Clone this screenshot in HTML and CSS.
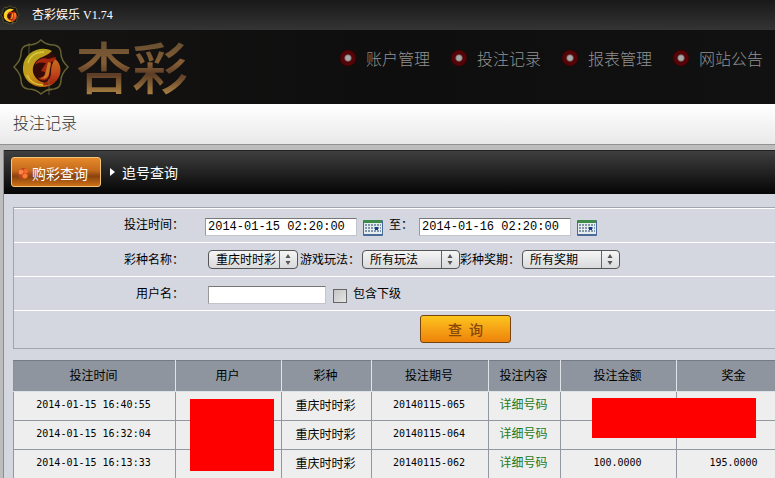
FILE: index.html
```html
<!DOCTYPE html>
<html lang="zh-CN">
<head>
  <meta charset="UTF-8" />
  <meta name="viewport" content="width=device-width, initial-scale=1.0"/>
  <title>杏彩娱乐 V1.74</title>
  <link rel="stylesheet" href="styles.css">
</head>
<body>
  <svg class="defs" width="0" height="0" aria-hidden="true">
    <defs>
      <linearGradient id="gold" x1="0" y1="0" x2=".6" y2="1">
        <stop offset="0" stop-color="#a8a41f"/>
        <stop offset=".6" stop-color="#c99a1a"/>
        <stop offset="1" stop-color="#b8610f"/>
      </linearGradient>
      <linearGradient id="flame" x1="0" y1="0" x2="0" y2="1">
        <stop offset="0" stop-color="#c4701c"/>
        <stop offset=".5" stop-color="#c24a1c"/>
        <stop offset="1" stop-color="#a3200c"/>
      </linearGradient>
      <symbol id="emblem" viewBox="0 0 58 58">
        <path d="M29 2c4 4 8 5 13 5 6 1 7 5 7 9 0 5 3 9 7 13-4 4-7 8-7 13 0 4-1 8-7 9-5 0-9 1-13 5-4-4-8-5-13-5-6-1-7-5-7-9 0-5-3-9-7-13 4-4 7-8 7-13 0-4 1-8 7-9 5 0 9-1 13-5z" fill="#12110c" stroke="#666234" stroke-width="1.500"/>
        <circle cx="30" cy="29" r="17" fill="#330c07"/>
        <path d="M40 13C29 7 12 14 11 29c-1 11 8 20 19 20 6 0 10-2 13-5-8 2-15 1-19-4-6-7-3-16 4-20 4-2 8-3 12-7z" fill="url(#gold)"/>
        <path d="M43 21c7 5 7 15 2 21-4 5-10 6-15 4 6-2 9-6 9-12 0-5 1-9 4-13z" fill="url(#flame)"/>
        <path d="M23 27c2-6 8-8 13-6l8-2c-1 3-2 5-5 5l-2 14c-1 5-8 6-11 2 5 0 7-3 7-6l-4-1 5-8c-4-1-8-1-11 2z" fill="#a5260e"/>
        <path d="M36 24l-3 13c-1 2-3 3-5 3 4 2 8 0 9-4l2-11z" fill="#c97524"/>
        <path d="M15 37c3 7 9 10 16 10M16 25c2-7 8-11 16-11" fill="none" stroke="#d6c93a" stroke-width="1.500"/>
        <path d="M37 41v16M34 52h6M17 5v12" stroke="#78703e" stroke-width="1" opacity=".7"/>
      </symbol>
      <symbol id="calendar" viewBox="0 0 20 17">
        <rect x="0" y="1" width="20" height="16" rx="1" fill="#4a6a98"/>
        <rect x="1" y="1" width="18" height="14" fill="#e7ecef"/>
        <rect x="1" y="1" width="18" height="3" fill="#3d8b48"/>
        <path d="M2 6h16M2 9h16M2 12h16" stroke="#8097ab" stroke-width="2" stroke-dasharray="2 1"/>
        <rect x="12" y="8" width="3" height="3" fill="#173d91"/>
      </symbol>
    </defs>
  </svg>

  <div class="titlebar">
    <svg class="app-icon"><use href="#emblem"/></svg>
    <span>杏彩娱乐 V1.74</span>
  </div>

  <header class="header">
    <a class="logo" href="#">
      <svg class="logo-mark"><use href="#emblem"/></svg>
      <span class="logo-text">杏彩</span>
    </a>
    <nav class="nav">
      <a href="#">账户管理</a>
      <a href="#">投注记录</a>
      <a href="#">报表管理</a>
      <a href="#">网站公告</a>
    </nav>
  </header>

  <h1 class="page-title">投注记录</h1>

  <main class="panel">
    <div class="tabs">
      <a class="tab active" href="#"><span class="tab-dots"></span>购彩查询</a>
      <a class="tab" href="#">追号查询</a>
    </div>

    <form class="search">
      <div class="row">
        <label class="label" for="start">投注时间：</label>
        <div class="fields dates">
          <input class="text date" type="text" id="start" value="2014-01-15 02:20:00">
          <button class="cal" type="button" aria-label="选择开始时间"><svg><use href="#calendar"/></svg></button>
          <label for="end">至：</label>
          <input class="text date" type="text" id="end" value="2014-01-16 02:20:00">
          <button class="cal" type="button" aria-label="选择结束时间"><svg><use href="#calendar"/></svg></button>
        </div>
      </div>
      <div class="row">
        <label class="label" for="lottery">彩种名称：</label>
        <div class="fields">
          <select class="short" id="lottery"><option>重庆时时彩</option></select>
          <label for="play">游戏玩法：</label>
          <select id="play"><option>所有玩法</option></select>
          <label for="issue">彩种奖期：</label>
          <select id="issue"><option>所有奖期</option></select>
        </div>
      </div>
      <div class="row">
        <label class="label" for="user">用户名：</label>
        <div class="fields users">
          <input class="text user" type="text" id="user">
          <input class="check" type="checkbox" id="sub">
          <label for="sub">包含下级</label>
        </div>
      </div>
      <div class="actions">
        <button class="submit" type="submit">查&ensp;询</button>
      </div>
    </form>

    <div class="records">
      <table>
        <colgroup>
          <col class="c-time"><col class="c-user"><col class="c-type"><col class="c-issue"><col class="c-detail"><col class="c-money"><col class="c-money">
        </colgroup>
        <thead>
          <tr><th>投注时间</th><th>用户</th><th>彩种</th><th>投注期号</th><th>投注内容</th><th>投注金额</th><th>奖金</th></tr>
        </thead>
        <tbody>
          <tr><td>2014-01-15 16:40:55</td><td></td><td>重庆时时彩</td><td>20140115-065</td><td><a href="#">详细号码</a></td><td></td><td></td></tr>
          <tr><td>2014-01-15 16:32:04</td><td></td><td>重庆时时彩</td><td>20140115-064</td><td><a href="#">详细号码</a></td><td></td><td></td></tr>
          <tr><td>2014-01-15 16:13:33</td><td></td><td>重庆时时彩</td><td>20140115-062</td><td><a href="#">详细号码</a></td><td>100.0000</td><td>195.0000</td></tr>
        </tbody>
      </table>
      <div class="mask mask-user"></div>
      <div class="mask mask-money"></div>
    </div>
  </main>
</body>
</html>
```
FILE: styles.css
```css
:root {
  --cjk: "Noto Sans CJK SC", sans-serif;
  --panel-bg: #d4d7df;
  --line: #9297a1;
}
* { box-sizing: border-box; }
body {
  margin: 0;
  background: #bdbdbd;
  color: #000;
  font: 12px/16px var(--cjk);
  overflow: hidden;
}
a { text-decoration: none; }
.defs { position: absolute; }

/* Window title */
.titlebar {
  display: flex;
  align-items: center;
  gap: 12px;
  height: 30px;
  background: linear-gradient(#191919, #343434);
  color: #fff;
  font-family: "Liberation Serif", "Noto Sans CJK SC", serif;
}
.app-icon { width: 20px; height: 20px; filter: brightness(1.3); }

/* Header */
.header {
  display: flex;
  align-items: center;
  justify-content: space-between;
  height: 74px;
  padding: 0 12px;
  background: linear-gradient(90deg, #151312, #0e0e0e 50%, #111);
}
.logo { display: flex; align-items: center; gap: 6px; }
.logo-mark { width: 58px; height: 58px; }
.logo-text {
  font-size: 56px;
  font-weight: 500;
  line-height: 70px;
  padding-bottom: 4px;
  background: linear-gradient(#6b5132 20%, #855d34 45%, #5c3c26 60%, #a37c40 85%);
  -webkit-background-clip: text;
  background-clip: text;
  color: transparent;
}
.nav { display: flex; gap: 20px; padding-bottom: 18px; }
.nav a {
  display: flex;
  align-items: center;
  gap: 9px;
  color: #929292;
  font-size: 16px;
  font-weight: 300;
  line-height: 24px;
}
.nav a::before {
  content: "";
  width: 18px;
  height: 18px;
  border-radius: 50%;
  background: radial-gradient(circle, #aaa 0 2px, #858080 3px, #550408 4px, #570307 7px, #2a0506 8px, transparent 9px);
}

.page-title {
  margin: 0;
  padding: 6px 13px 9px;
  border-bottom: 1px solid #929292;
  background: linear-gradient(#fff, #e9e9e9);
  color: #333;
  font-size: 16px;
  font-weight: 300;
  line-height: 25px;
}

/* Content panel */
.panel {
  margin: 5px 0 0 3px;
  border-left: 1px solid #8b8b8b;
  background: var(--panel-bg);
  overflow: hidden;
}
.tabs {
  display: flex;
  align-items: center;
  gap: 9px;
  height: 44px;
  padding: 0 7px 2px;
  border-top: 1px solid #222;
  background: linear-gradient(#3f3f3f, #050505);
}
.tab {
  display: flex;
  align-items: center;
  gap: 7px;
  color: #fff;
  font-size: 14px;
  line-height: 20px;
}
.tab:not(.active)::before {
  content: "";
  border: 4px solid transparent;
  border-left: 5px solid #fff;
  border-right: 0;
}
.tab.active {
  gap: 3px;
  height: 30px;
  padding: 3px 12px 0 6px;
  border: 1px solid #f4c778;
  border-radius: 3px;
  background: linear-gradient(#e68a2b, #c46a1c 45%, #89420f 65%, #cd7017);
}
.tab-dots {
  width: 11px;
  height: 11px;
  border-radius: 50%;
  background: radial-gradient(circle at 3px 4px, #ff8444 2px, transparent 3px), radial-gradient(circle at 8px 3px, #f5672b 2px, transparent 3px), radial-gradient(circle at 7px 8px, #ff7c33 2px, transparent 3px), #b8481c;
}

/* Search form */
.search {
  margin: 13px 0 0 9px;
  border: 1px solid #a0a5b0;
  border-right: 0;
  box-shadow: inset 0 1px #fff;
}
.row {
  display: flex;
  align-items: center;
  height: 34px;
  border-bottom: 1px solid #fff;
}
.row:first-child { height: 35px; }
.row label { padding-bottom: 2px; }
.label {
  flex: none;
  width: 181px;
  padding-right: 11px;
  text-align: right;
}
.fields { display: flex; align-items: center; padding-left: 13px; white-space: nowrap; }
.fields.dates { gap: 6px; padding-left: 10px; }
.fields.users { gap: 6px; }
.text {
  height: 18px;
  margin: 4px 0 0;
  padding: 0 2px;
  border: 1px solid #c3c5ca;
  border-top-color: #777;
  border-left-color: #999;
  border-radius: 0;
  background: #fff;
  font: 12px "Liberation Mono", monospace;
}
.date { width: 152px; }
.user { width: 118px; }
.cal {
  width: 20px;
  height: 17px;
  margin-top: 4px;
  padding: 0;
  border: 0;
  background: none;
}
.cal svg { display: block; width: 20px; height: 17px; }
select {
  appearance: none;
  width: 98px;
  height: 19px;
  margin: 0;
  padding: 0 20px 2px 7px;
  border: 1px solid #555;
  border-radius: 4px;
  background: url("data:image/svg+xml,%3Csvg xmlns='http://www.w3.org/2000/svg' width='18' height='17'%3E%3Cpath d='M.5 0v17' stroke='%23666'/%3E%3Cpath d='M6.500 7l2.500-4 2.500 4zM6.500 10l2.500 4 2.500-4z' fill='%23555'/%3E%3C/svg%3E") right center no-repeat, linear-gradient(#f5f5f5, #d9dadc);
  color: #000;
  font: 12px/15px var(--cjk);
}
select.short { width: 90px; margin-right: 2px; }
select + label { margin-right: 2px; }
.check {
  appearance: none;
  width: 14px;
  height: 14px;
  margin: 4px 0 0;
  border: 1px solid #666;
  background: linear-gradient(135deg, #c4c4c4, #e6e6e6);
}
.check:checked { background: #555; }
.users .text { margin-top: 2px; }
.users .check { margin-left: 1px; }
.actions { height: 37px; padding: 4px 0 0 406px; }
.submit {
  width: 91px;
  height: 28px;
  padding: 0;
  border: 1px solid #754411;
  border-radius: 3px;
  background: linear-gradient(#fbc51d, #f6a316 50%, #ee8209);
  color: #85480a;
  font: 500 14px/20px var(--cjk);
}

/* Records */
.records { position: relative; margin: 11px 0 0 9px; }
table {
  width: 100%;
  min-width: 779px;
  table-layout: fixed;
  border-collapse: collapse;
}
.c-time { width: 162px; }
.c-user { width: 106px; }
.c-type { width: 90px; }
.c-issue { width: 117px; }
.c-detail { width: 72px; }
.c-money { width: 116px; }
th, td { padding: 0 2px 2px 0; text-align: center; }
th {
  height: 31px;
  border: 1px solid #dfe2e7;
  border-top: 1px solid #747c88;
  border-left-color: #8b919c;
  background: #8e959f;
  font-weight: 400;
}
th + th { border-left-color: #dfe2e7; }
td {
  height: 29px;
  border: 1px solid var(--line);
  background: #eee;
  font-family: "DejaVu Sans Mono", monospace;
  font-size: 10px;
}
td:nth-child(3), td a { font-family: var(--cjk); font-size: 12px; }
td a { color: #1c7a1c; }
.mask { position: absolute; background: #f00; }
.mask-user { left: 177px; top: 39px; width: 84px; height: 72px; }
.mask-money { left: 579px; top: 38px; width: 164px; height: 40px; }
```
